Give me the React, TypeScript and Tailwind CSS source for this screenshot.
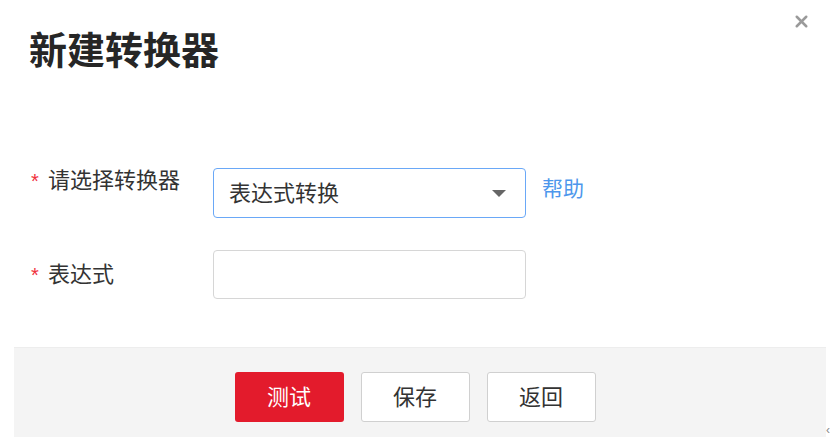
import { X } from "lucide-react";

const FONT = "font-['Liberation_Sans','Noto_Sans_CJK_SC',sans-serif]";

function Label({ text }: { text: string }) {
  return (
    <div className="flex w-[182px] shrink-0 items-start">
      <span className="w-[17px] text-[20px] leading-[22px] text-[#f0303c]">*</span>
      <span className="text-[22px] leading-[22px] text-[#333]">{text}</span>
    </div>
  );
}

export default function App() {
  return (
    <div className={`${FONT} relative flex h-[437px] w-[830px] flex-col overflow-hidden bg-white`}>
      <button
        type="button"
        aria-label="Close"
        className="absolute right-[19px] top-[11px] grid h-[20px] w-[20px] place-items-center text-[#9a9a9a]"
      >
        <X size={19} strokeWidth={3.2} />
      </button>

      <header className="pl-[29px] pt-[26px]">
        <h2 className="text-[38px] font-bold leading-[50px] text-[#262626]">新建转换器</h2>
      </header>

      <form className="flex flex-col gap-[32px] pl-[31px] pt-[92px]">
        <div className="flex items-start">
          <div className="pt-[2px]">
            <Label text="请选择转换器" />
          </div>
          <div className="flex h-[50px] w-[313px] items-center justify-between rounded-[4px] border-[1.5px] border-[#6aa8f7] pl-[15px] pr-[19px]">
            <span className="text-[22px] text-[#333]">表达式转换</span>
            <span className="h-0 w-0 border-x-[7px] border-t-[7px] border-x-transparent border-t-[#666]" />
          </div>
          <a className="ml-[16px] pt-[10px] text-[21px] leading-[22px] text-[#4d97ec]">帮助</a>
        </div>

        <div className="flex items-center">
          <Label text="表达式" />
          <div className="h-[49px] w-[313px] rounded-[4px] border-[1.5px] border-[#d6d6d6]" />
        </div>
      </form>

      <footer className="ml-[14px] mr-[4px] mt-auto flex h-[90px] justify-center gap-[17px] border-t border-[#ededed] bg-[#f4f4f4] pr-[10px] pt-[24px]">
        <button type="button" className="h-[50px] w-[109px] rounded-[3px] bg-[#e31b2c] text-[22px] text-white">
          测试
        </button>
        <button type="button" className="h-[50px] w-[109px] rounded-[3px] border-[1.5px] border-[#d0d0d0] bg-white text-[22px] text-[#333]">
          保存
        </button>
        <button type="button" className="h-[50px] w-[109px] rounded-[3px] border-[1.5px] border-[#d0d0d0] bg-white text-[22px] text-[#333]">
          返回
        </button>
      </footer>
      <span className="absolute bottom-[1px] right-[0px] text-[12px] leading-none text-[#888]">‹</span>
    </div>
  );
}
